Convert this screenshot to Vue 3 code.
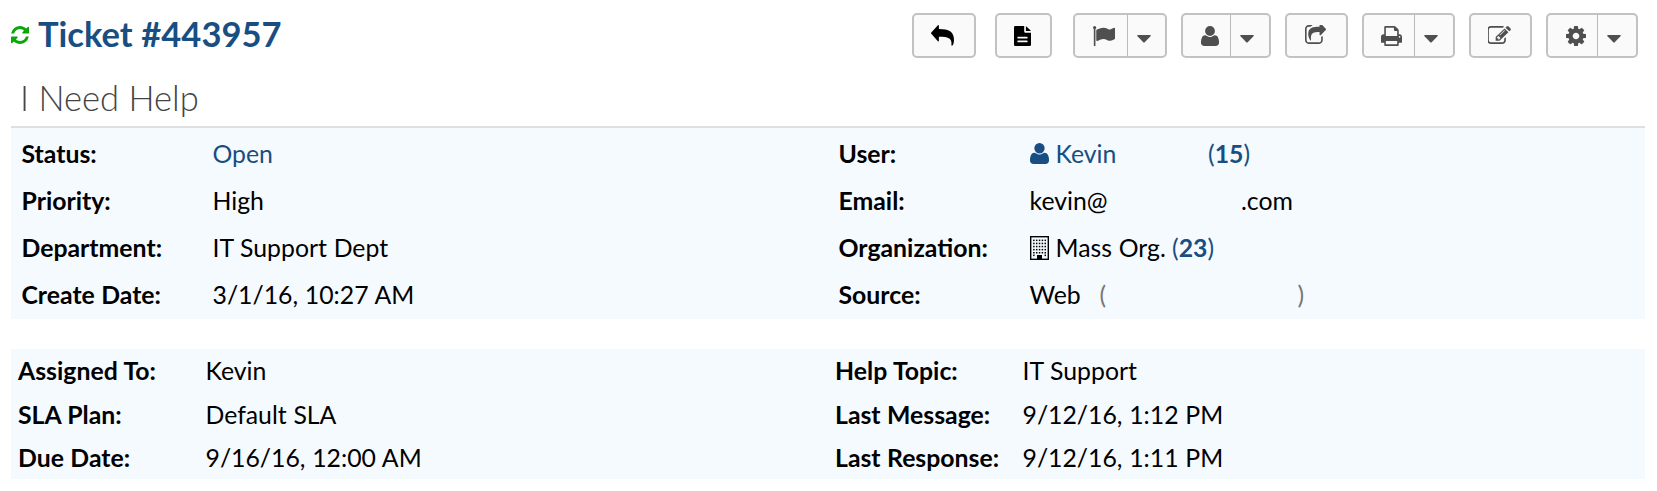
<script setup>
const userPath = 'M1408 131q0 -120 -73 -189.5t-194 -69.5h-874q-121 0 -194 69.5t-73 189.5q0 53 3.5 103.5t14 109t26.5 108.5t43 97.5t62 81t85.5 53.5t111.5 20q9 0 42 -21.5t74.5 -48t108 -48t133.5 -21.5t133.5 21.5t108 48t74.5 48t42 21.5q61 0 111.5 -20t85.5 -53.5t62 -81t43 -97.5t26.5 -108.5t14 -109t3.5 -103.5zM1088 1024q0 -159 -112.5 -271.5t-271.5 -112.5t-271.5 112.5t-112.5 271.5t112.5 271.5t271.5 112.5t271.5 -112.5t112.5 -271.5z'

const buttons = [
  { name: 'reply', box: '90 76 70 62', d: 'M91 98L111 77q3-2 3 2v9c30 0 46 8 46 32c0 8-2 13-4 16q-3 3-4-1c2-18-6-24-38-24v11q0 4-3 2L91 102q-2-2 0-4z' },
  { name: 'note', box: '0 0 1280 1536', d: 'M96 0h672v416q0 96 96 96h416v928q0 96-96 96H96q-96 0-96-96V96Q0 0 96 0zM896 10q30 10 60 40l274 274q30 30 40 60H896zM288 832q-32 0-32 32v64q0 32 32 32h704q32 0 32-32v-64q0-32-32-32zM288 1120q-32 0-32 32v64q0 32 32 32h704q32 0 32-32v-64q0-32-32-32z' },
  { name: 'flag', menu: true, box: '64 128 1728 1536', d: 'M320 256q0 72-64 110v1266q0 13-9.5 22.5t-22.5 9.5h-64q-13 0-22.5-9.5t-9.5-22.5v-1266q-64-38-64-110 0-53 37.5-90.5t90.5-37.5 90.5 37.5 37.5 90.5zm1472 64v763q0 25-12.5 38.5t-39.5 27.5q-215 116-369 116-61 0-123.5-22t-108.5-48-115.5-48-142.5-22q-192 0-464 146-17 9-33 9-26 0-45-19t-19-45v-742q0-32 31-55 21-14 79-43 236-120 421-120 107 0 200 29t219 88q38 19 88 19 54 0 117.5-21t110-47 88-47 54.5-21q26 0 45 19t19 45z' },
  { name: 'assign', menu: true, box: '0 -1408 1408 1536', flip: true, d: userPath },
  { name: 'share', box: '64 128 1664 1408', d: 'M1472 989v259q0 119-84.5 203.5t-203.5 84.5h-832q-119 0-203.5-84.5t-84.5-203.5v-832q0-119 84.5-203.5t203.5-84.5h255q13 0 22.5 9.5t9.5 22.5q0 27-26 32-77 26-133 60-10 4-16 4h-112q-66 0-113 47t-47 113v832q0 66 47 113t113 47h832q66 0 113-47t47-113v-214q0-19 18-29 28-13 54-37 16-16 35-8 21 9 21 31zm237-496l-384 384q-18 19-45 19-12 0-25-5-39-17-39-59v-192h-160q-323 0-438 131-119 137-74 473 3 23-20 34-8 2-12 2-16 0-26-13-10-14-21-31t-39.5-68.5-49.5-99.5-38.5-114-17.5-122q0-49 3.5-91t14-90 28-88 47-81.5 68.5-74 94.5-61.5 124.5-48.5 159.5-30.5 196.5-11h160v-192q0-42 39-59 13-5 25-5 26 0 45 19l384 384q19 19 19 45t-19 45z' },
  { name: 'print', menu: true, box: '64 128 1664 1536', d: 'M448 1536h896v-256h-896v256zm0-640h896v-384h-160q-40 0-68-28t-28-68v-160h-640v640zm1152 64q0-26-19-45t-45-19-45 19-19 45 19 45 45 19 45-19 19-45zm128 0v416q0 13-9.5 22.5t-22.5 9.5h-224v160q0 40-28 68t-68 28h-960q-40 0-68-28t-28-68v-160h-224q-13 0-22.5-9.5t-9.5-22.5v-416q0-79 56.5-135.5t135.5-56.5h64v-544q0-40 28-68t68-28h672q40 0 88 20t76 48l152 152q28 28 48 76t20 88v256h64q79 0 135.5 56.5t56.5 135.5z' },
  { name: 'edit', box: '64 128 1728 1408', d: 'M888 1184l116-116-152-152-116 116v56h96v96h56zm440-720q-16-16-33 1l-350 350q-17 17-1 33t33-1l350-350q17-17 1-33zm80 594v190q0 119-84.5 203.5t-203.5 84.5h-832q-119 0-203.5-84.5t-84.5-203.5v-832q0-119 84.5-203.5t203.5-84.5h832q63 0 117 25 15 7 18 23 3 17-9 29l-49 49q-14 14-32 8-23-6-45-6h-832q-66 0-113 47t-47 113v832q0 66 47 113t113 47h832q66 0 113-47t47-113v-126q0-13 9-22l64-64q15-15 35-7t20 29zm-96-738l288 288-672 672h-288v-288zm444 132l-92 92-288-288 92-92q28-28 68-28t68 28l152 152q28 28 28 68t-28 68z' },
  { name: 'settings', menu: true, box: '128 128 1536 1536', d: 'M1152 896q0-106-75-181t-181-75-181 75-75 181 75 181 181 75 181-75 75-181zm512-109v222q0 12-8 23t-20 13l-185 28q-19 54-39 91 35 50 107 138 10 12 10 25t-9 23q-27 37-99 108t-94 71q-12 0-26-9l-138-108q-44 23-91 38-16 136-29 186-7 28-36 28h-222q-14 0-24.5-8.5t-11.5-21.5l-28-184q-49-16-90-37l-141 107q-10 9-25 9-14 0-25-11-126-114-165-168-7-10-7-23 0-12 8-23 15-21 51-66.5t54-70.5q-27-50-41-99l-183-27q-13-2-21-12.5t-8-23.5v-222q0-12 8-23t19-13l186-28q14-46 39-92-40-57-107-138-10-12-10-24 0-10 9-23 26-36 98.5-107.5t94.5-71.5q13 0 26 10l138 107q44-23 91-38 16-136 29-186 7-28 36-28h222q14 0 24.5 8.5t11.5 21.5l28 184q49 16 90 37l142-107q9-9 24-9 13 0 25 10 129 119 165 170 7 8 7 22 0 12-8 23-15 21-51 66.5t-54 70.5q26 50 41 98l183 28q13 2 21 12.5t8 23.5z' },
]

const summary = [
  ['Status:', 'Open', true],
  ['Priority:', 'High'],
  ['Department:', 'IT Support Dept'],
  ['Create Date:', '3/1/16, 10:27 AM'],
]
const assignment = [
  ['Assigned To:', 'Kevin', 'Help Topic:', 'IT Support'],
  ['SLA Plan:', 'Default SLA', 'Last Message:', '9/12/16, 1:12 PM'],
  ['Due Date:', '9/16/16, 12:00 AM', 'Last Response:', '9/12/16, 1:11 PM'],
]
const windowRows = [0, 1, 2, 3, 4]
const windowCols = [0, 1, 2, 3, 4]
</script>

<template>
  <main class="ticket">
    <header class="top">
      <h1>
        <svg class="refresh" viewBox="128 128 1536 1536"><path d="M1639 1056q0 5-1 7-64 268-268 434.5t-478 166.5q-146 0-282.5-55t-243.5-157l-129 129q-19 19-45 19t-45-19-19-45v-448q0-26 19-45t45-19h448q26 0 45 19t19 45-19 45l-137 137q71 66 161 102t187 36q134 0 250-65t186-179q11-17 53-117 8-23 30-23h192q13 0 22.5 9.5t9.5 22.5zm25-800v448q0 26-19 45t-45 19h-448q-26 0-45-19t-19-45 19-45l138-138q-148-137-349-137-134 0-250 65t-186 179q-11 17-53 117-8 23-30 23h-199q-13 0-22.5-9.5t-9.5-22.5v-7q65-268 270-434.5t480-166.5q146 0 284 55.5t245 156.5l130-129q19-19 45-19t45 19 19 45z" /></svg>
        <a>Ticket #443957</a>
      </h1>
      <nav class="actions">
        <button v-for="b in buttons" :key="b.name" type="button" class="btn" :class="b.name">
          <span class="face">
            <svg class="glyph" :viewBox="b.box" preserveAspectRatio="none">
              <path :d="b.d" fill-rule="evenodd" :transform="b.flip ? 'scale(1,-1)' : undefined" />
            </svg>
          </span>
          <span v-if="b.menu" class="drop">
            <svg class="caret" viewBox="0 0 14 8"><path d="M1 0h12q1.300 .3.500 1.300L7.700 7.300q-.7.700-1.400 0L.5 1.300Q-.3.300 1 0z" /></svg>
          </span>
        </button>
      </nav>
    </header>

    <h2>I Need Help</h2>

    <section class="panel first">
      <dl>
        <div v-for="r in summary" :key="r[0]" class="row">
          <dt>{{ r[0] }}</dt>
          <dd :class="{ link: r[2] }">{{ r[1] }}</dd>
        </div>
      </dl>
      <dl>
        <div class="row">
          <dt>User:</dt>
          <dd class="link">
            <svg class="person" viewBox="0 -1408 1408 1536" preserveAspectRatio="none"><path :d="userPath" transform="scale(1,-1)" /></svg>
            <span class="name">Kevin</span><span>(<b>15</b>)</span>
          </dd>
        </div>
        <div class="row">
          <dt>Email:</dt>
          <dd><span class="mailbox">kevin@</span><span>.com</span></dd>
        </div>
        <div class="row">
          <dt>Organization:</dt>
          <dd>
            <svg class="building" viewBox="0 0 19 24">
              <rect x=".7" y=".7" width="17.600" height="22.600" fill="none" stroke="#000" stroke-width="1.400" />
              <g v-for="y in windowRows" :key="y">
                <rect v-for="x in windowCols" :key="x" :x="3.1 + x * 2.85" :y="3.6 + y * 3.1" width="1.500" height="1.500" />
              </g>
              <rect x="3.1" y="18.600" width="1.500" height="1.500" />
              <rect x="14.500" y="18.600" width="1.500" height="1.500" />
              <rect x="7" y="19" width="5" height="4.500" />
            </svg>
            <span class="org">Mass Org.</span><span class="link">(<b>23</b>)</span>
          </dd>
        </div>
        <div class="row">
          <dt>Source:</dt>
          <dd><span class="web">Web</span><span class="faded open">(</span><span class="faded">)</span></dd>
        </div>
      </dl>
    </section>

    <section class="panel second">
      <dl>
        <div v-for="r in assignment" :key="r[0]" class="row">
          <dt>{{ r[0] }}</dt>
          <dd>{{ r[1] }}</dd>
        </div>
      </dl>
      <dl>
        <div v-for="r in assignment" :key="r[2]" class="row">
          <dt>{{ r[2] }}</dt>
          <dd>{{ r[3] }}</dd>
        </div>
      </dl>
    </section>
  </main>
</template>

<style>
body {
  margin: 0;
  background: #fff;
}
</style>

<style scoped>
.ticket {
  box-sizing: border-box;
  width: 1657px;
  height: 491px;
  padding: 0 12px 0 11px;
  overflow: hidden;
  font-family: Lato, "Open Sans", sans-serif;
  font-size: 24.8px;
  word-spacing: .4px;
  color: #000;
}
.top {
  display: flex;
  justify-content: space-between;
  height: 72px;
}
h1 {
  display: flex;
  align-items: flex-start;
  margin: 0;
  font-size: 34.5px;
  line-height: 40px;
  font-weight: 700;
  color: #184e81;
}
h1 a {
  margin: 14px 0 0 9px;
}
.refresh {
  width: 18px;
  height: 18px;
  margin-top: 26px;
  fill: #0aa60a;
}
.actions {
  display: flex;
  align-items: flex-start;
  padding: 13px 7px 0 0;
}
.btn {
  display: flex;
  box-sizing: border-box;
  height: 45px;
  margin: 0 0 0 14px;
  padding: 0;
  border: 2px solid #c2c2c2;
  border-radius: 5px;
  background: #fafafa;
  fill: #4f4f4f;
}
.face {
  display: flex;
  flex: 1;
  align-items: flex-start;
  justify-content: center;
}
.drop {
  display: flex;
  box-sizing: border-box;
  width: 38px;
  height: 100%;
  padding: 20px 6px 0 0;
  justify-content: center;
  border-left: 1px solid #bbb;
}
.caret {
  width: 14px;
  height: 8px;
}
.glyph {
  width: 20px;
  height: 20px;
  margin-top: 11px;
}
.reply { width: 64px; fill: #000; }
.reply .glyph { width: 23px; height: 21px; margin-top: 10px; margin-right: 4px; }
.note { width: 57px; margin-left: 19px; fill: #000; }
.note .glyph { width: 17px; margin-right: 2px; }
.flag { width: 94px; margin-left: 21px; }
.flag .glyph { width: 22px; margin-left: 6px; }
.assign { width: 90px; }
.assign .glyph { width: 18px; margin-left: 6px; }
.assign .drop { width: 39px; }
.share { width: 63px; }
.share .glyph { width: 21px; height: 19px; margin-top: 10px; margin-left: -2px; }
.print { width: 93px; }
.print .glyph { width: 21px; margin-left: 4px; }
.print .drop { width: 39px; }
.edit { width: 63px; }
.edit .glyph { width: 23px; height: 18px; margin-left: -2px; }
.settings { width: 92px; }
.settings .glyph { margin-left: 6px; }
.settings .drop { width: 39px; }
h2 {
  height: 52px;
  margin: 0;
  padding: 0 0 2px 9px;
  font-size: 34.6px;
  line-height: 52px;
  font-weight: 300;
  word-spacing: 0;
  color: #444;
}
.panel {
  display: grid;
  grid-template-columns: 817px 817px;
  background: #f5faff;
}
dl, dd {
  margin: 0;
}
.row {
  display: flex;
  align-items: center;
  white-space: pre;
}
dt {
  font-weight: 700;
}
dd {
  display: flex;
  align-items: center;
}
.first {
  height: 191px;
  border-top: 2px solid #dfdfdf;
}
.first .row {
  height: 46.900px;
  padding: 5px 0 0 10.500px;
  box-sizing: border-box;
}
.first dt {
  width: 191px;
}
.second {
  height: 130px;
  margin-top: 30px;
}
.second .row {
  height: 43.500px;
  padding-left: 7px;
}
.second dt {
  width: 187.500px;
}
.link {
  color: #184e81;
}
.person {
  width: 19px;
  height: 21px;
  margin: 0 7px 1px 0;
  fill: #184e81;
}
.name { width: 152.500px; }
.mailbox { width: 211.500px; }
.building {
  width: 19px;
  height: 24px;
  margin-right: 7px;
}
.org { width: 116.500px; }
.web { width: 70px; }
.faded { color: #777; }
.open { width: 198px; }
</style>
